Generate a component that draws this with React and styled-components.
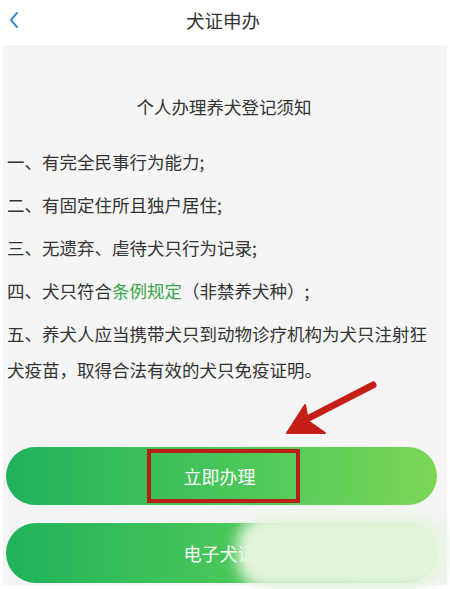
import React from "react";
import styled, { createGlobalStyle } from "styled-components";

const GlobalStyle = createGlobalStyle`
  html, body {
    margin: 0;
    padding: 0;
    background: #fff;
    font-family: "Noto Sans CJK SC", "Noto Sans", sans-serif;
  }
`;

const Page = styled.div`
  width: 450px;
  height: 589px;
  overflow: hidden;
  background: #fff;
  position: relative;
`;

const Header = styled.div`
  height: 45px;
  display: grid;
  grid-template-columns: 44px 1fr 44px;
  align-items: center;
`;

const Back = styled.div`
  display: flex;
  align-items: center;
  padding-left: 8px;
  margin-top: -6px;
`;

const HeaderTitle = styled.div`
  text-align: center;
  font-size: 18.5px;
  color: #333;
  margin-top: -6px;
  padding-right: 4px;
`;

const Panel = styled.div`
  position: relative;
  margin: 0 3px;
  height: 540px;
  background: #f5f5f5;
  padding: 50px 10px 0 4px;
  box-sizing: border-box;
`;

const NoticeTitle = styled.div`
  text-align: center;
  font-size: 17.5px;
  line-height: 24px;
  color: #333;
  padding-left: 4px;
  margin-bottom: 25px;
`;

const List = styled.div`
  display: flex;
  flex-direction: column;
  gap: 7px;
`;

const Item = styled.div`
  font-size: 17.5px;
  line-height: 36px;
  color: #343434;
`;

const Link = styled.span`
  color: #3aa54a;
`;

const Buttons = styled.div`
  margin: 59px 0 0 -1px;
  display: flex;
  flex-direction: column;
  gap: 18px;
`;

const Pill = styled.div`
  position: relative;
  height: ${(p) => p.$h}px;
  border-radius: 30px;
  background: linear-gradient(90deg, #20b25a 0%, #4cc85a 55%, #7cd757 100%);
  color: #fff;
  font-size: 18px;
  display: flex;
  align-items: center;
  justify-content: center;
  padding-right: 4px;
`;

const Frame = styled.div`
  position: absolute;
  left: 141px;
  top: 2px;
  width: 153px;
  height: 54px;
  box-sizing: border-box;
  border: 4px solid #b91d17;
`;

const Arrow = styled.svg`
  position: absolute;
  left: 0;
  top: 0;
  pointer-events: none;
`;

// blurred-out patch over the second button's label
const Smudge = styled.div`
  position: absolute;
  left: 234px;
  top: 470px;
  width: 210px;
  height: 74px;
  border-radius: 30px;
  background: rgb(228, 243, 222);
  filter: blur(7px);
`;

export default function App() {
  return (
    <Page>
      <GlobalStyle />
      <Header>
        <Back>
          <svg width="12" height="18" viewBox="0 0 12 18">
            <path
              d="M9 2 L3 9 L9 16"
              fill="none"
              stroke="#3f8fc2"
              strokeWidth="2"
              strokeLinecap="round"
              strokeLinejoin="round"
            />
          </svg>
        </Back>
        <HeaderTitle>犬证申办</HeaderTitle>
        <div />
      </Header>
      <Panel>
        <NoticeTitle>个人办理养犬登记须知</NoticeTitle>
        <List>
          <Item>一、有完全民事行为能力;</Item>
          <Item>二、有固定住所且独户居住;</Item>
          <Item>三、无遗弃、虐待犬只行为记录;</Item>
          <Item>
            四、犬只符合<Link>条例规定</Link>（非禁养犬种）;
          </Item>
          <Item>五、养犬人应当携带犬只到动物诊疗机构为犬只注射狂犬疫苗，取得合法有效的犬只免疫证明。</Item>
        </List>
        <Buttons>
          <Pill $h={58}>
            立即办理
            <Frame />
          </Pill>
          <Pill $h={60}>电子犬证</Pill>
        </Buttons>
        <Arrow width="444" height="540" viewBox="0 0 444 540">
          <path d="M370 340 L300 376" stroke="#c52018" strokeWidth="7" strokeLinecap="round" />
          <path d="M284 388 L302 360 L305 376 L322 388 Z" fill="#c52018" stroke="#c52018" strokeWidth="2" strokeLinejoin="round" />
        </Arrow>
        <Smudge />
      </Panel>
    </Page>
  );
}
